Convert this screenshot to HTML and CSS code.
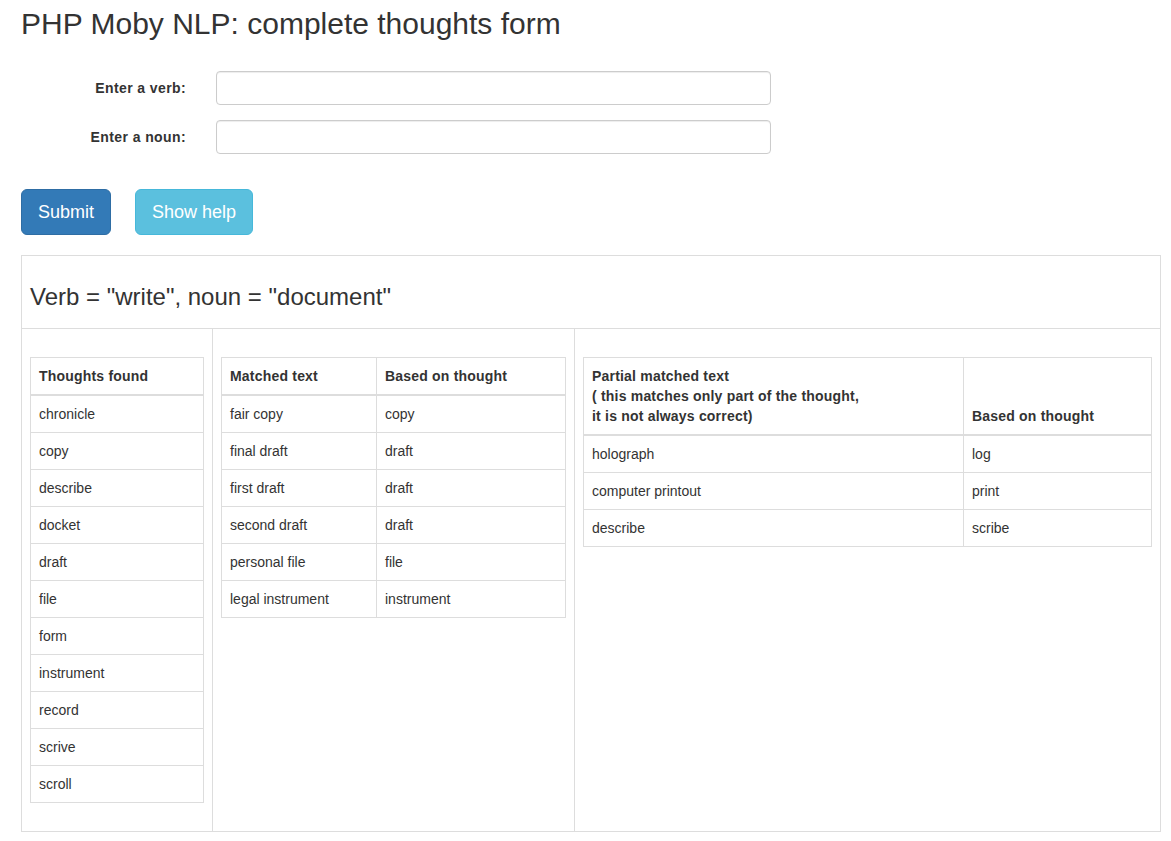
FILE: index.html
```html
<!DOCTYPE html>
<html>
<head>
<meta charset="utf-8">
<title>PHP Moby NLP: complete thoughts form</title>
<link rel="stylesheet" href="styles.css">
</head>
<body>
<div class="container">
  <h2 class="title">PHP Moby NLP: complete thoughts form</h2>
  <form class="form">
    <div class="form-group">
      <label class="control-label" for="verb">Enter a verb:</label>
      <div class="control-wrap"><input class="form-control" id="verb" type="text"></div>
    </div>
    <div class="form-group">
      <label class="control-label" for="noun">Enter a noun:</label>
      <div class="control-wrap"><input class="form-control" id="noun" type="text"></div>
    </div>
    <div class="buttons">
      <button type="button" class="btn btn-primary">Submit</button>
      <button type="button" class="btn btn-info">Show help</button>
    </div>
  </form>

  <div class="panel">
    <div class="panel-heading">
      <h3 class="panel-title">Verb = "write", noun = "document"</h3>
    </div>
    <div class="panel-body">
      <div class="col col-1">
        <table class="table">
          <thead><tr><th>Thoughts found</th></tr></thead>
          <tbody>
            <tr><td>chronicle</td></tr>
            <tr><td>copy</td></tr>
            <tr><td>describe</td></tr>
            <tr><td>docket</td></tr>
            <tr><td>draft</td></tr>
            <tr><td>file</td></tr>
            <tr><td>form</td></tr>
            <tr><td>instrument</td></tr>
            <tr><td>record</td></tr>
            <tr><td>scrive</td></tr>
            <tr><td>scroll</td></tr>
          </tbody>
        </table>
      </div>
      <div class="col col-2">
        <table class="table">
          <thead><tr><th class="w-matched">Matched text</th><th>Based on thought</th></tr></thead>
          <tbody>
            <tr><td>fair copy</td><td>copy</td></tr>
            <tr><td>final draft</td><td>draft</td></tr>
            <tr><td>first draft</td><td>draft</td></tr>
            <tr><td>second draft</td><td>draft</td></tr>
            <tr><td>personal file</td><td>file</td></tr>
            <tr><td>legal instrument</td><td>instrument</td></tr>
          </tbody>
        </table>
      </div>
      <div class="col col-3">
        <table class="table">
          <thead><tr><th class="w-partial">Partial matched text<br>( this matches only part of the thought,<br>it is not always correct)</th><th>Based on thought</th></tr></thead>
          <tbody>
            <tr><td>holograph</td><td>log</td></tr>
            <tr><td>computer printout</td><td>print</td></tr>
            <tr><td>describe</td><td>scribe</td></tr>
          </tbody>
        </table>
      </div>
    </div>
  </div>
</div>
</body>
</html>
```

FILE: styles.css
```css
* { box-sizing: border-box; }

html, body {
  margin: 0;
  padding: 0;
  background: #fff;
}

body {
  font-family: "Liberation Sans", Arial, Helvetica, sans-serif;
  font-size: 14px;
  line-height: 20px;
  color: #333;
}

.container {
  width: 1171px;
  padding: 0 10px 0 21px;
}

.title {
  margin: 7px 0 0;
  font-size: 30px;
  line-height: 33px;
  font-weight: 400;
  color: #333;
}

.form {
  margin-top: 31px;
}

.form-group {
  display: flex;
  margin-bottom: 15px;
}

.control-label {
  width: 165px;
  padding-top: 7px;
  padding-right: 0;
  text-align: right;
  font-weight: 700;
  line-height: 20px;
  letter-spacing: 0.4px;
}

.control-wrap {
  margin-left: 30px;
  width: 555px;
}

.form-control {
  display: block;
  width: 100%;
  height: 34px;
  padding: 6px 12px;
  font-family: inherit;
  font-size: 14px;
  line-height: 20px;
  color: #555;
  background: #fff;
  border: 1px solid #ccc;
  border-radius: 4px;
  box-shadow: inset 0 1px 1px rgba(0, 0, 0, 0.075);
  outline: none;
}

.buttons {
  display: flex;
  gap: 24px;
  padding-top: 20px;
}

.btn {
  display: inline-block;
  padding: 10px 16px;
  font-family: inherit;
  font-size: 18px;
  line-height: 24px;
  border: 1px solid transparent;
  border-radius: 6px;
  color: #fff;
  cursor: pointer;
}

.btn-primary {
  background: #337ab7;
  border-color: #2e6da4;
}

.btn-info {
  background: #5bc0de;
  border-color: #46b8da;
}

.panel {
  margin-top: 20px;
  width: 1140px;
  border: 1px solid #ddd;
}

.panel-heading {
  padding: 8px;
  border-bottom: 1px solid #ddd;
}

.panel-title {
  margin: 20px 0 10px;
  font-size: 24px;
  line-height: 26.4px;
  font-weight: 400;
  color: #333;
}

.panel-body {
  display: grid;
  grid-template-columns: 190px 362px 1fr;
}

.col {
  padding: 28px 8px 28px 8px;
}

.col-2, .col-3 {
  border-left: 1px solid #ddd;
}

.table {
  width: 100%;
  border-collapse: collapse;
  border-spacing: 0;
  border: 1px solid #ddd;
}

.table th,
.table td {
  padding: 8px;
  line-height: 20px;
  text-align: left;
  border: 1px solid #ddd;
}

.table th {
  font-weight: 700;
  vertical-align: bottom;
  border-bottom: 2px solid #ddd;
  letter-spacing: 0.2px;
}

.table td {
  vertical-align: top;
}

.w-matched {
  width: 155px;
}

.w-partial {
  width: 380px;
}
```
